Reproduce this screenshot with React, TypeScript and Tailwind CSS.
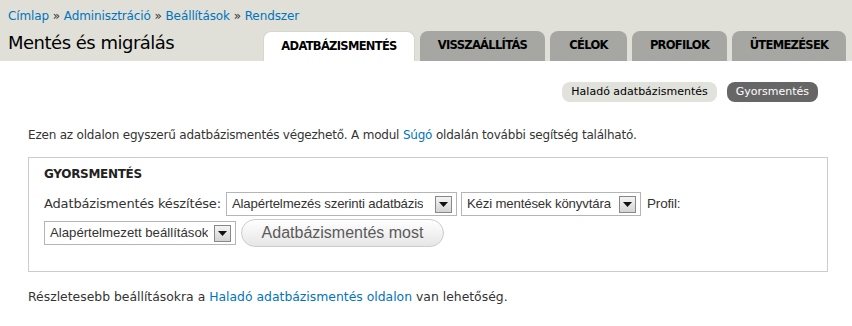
import React from 'react';

const sans = 'font-["DejaVu_Sans",Verdana,sans-serif]';
const arial = 'font-["Liberation_Sans",Arial,sans-serif]';

const tabs = [
  { label: 'Adatbázismentés', w: 'w-[152px]', active: true },
  { label: 'Visszaállítás', w: 'w-[125px]', active: false },
  { label: 'Célok', w: 'w-[77px]', active: false },
  { label: 'Profilok', w: 'w-[95px]', active: false },
  { label: 'Ütemezések', w: 'w-[114px]', active: false },
];

const FakeSelect: React.FC<{ value: string; width: string }> = ({ value, width }) => (
  <div
    className={`${width} h-[24px] flex items-center justify-between gap-[3px] border border-[#b5b5b5] bg-white pl-[5px] pr-[4px] ${arial} text-[13.2px] text-[#333]`}
  >
    <span className="whitespace-nowrap overflow-hidden">{value}</span>
    <span className="w-[17px] h-[17px] shrink-0 border border-[#888] bg-gradient-to-b from-[#f4f4f4] to-[#d4d4d4] flex items-center justify-center">
      <svg width="9" height="5" viewBox="0 0 9 5">
        <path d="M0 0h9L4.5 5z" fill="#111" />
      </svg>
    </span>
  </div>
);

export default function App() {
  return (
    <div className={`w-[852px] h-[326px] bg-white ${sans} text-[#333] overflow-hidden`}>
      {/* fejléc */}
      <div className="bg-[#e0e0d8] h-[61px] pl-2 pr-[6px] flex flex-col">
        <div className="pt-[8px] h-[31px] text-[12px] leading-[16px] text-[#0074bd] tracking-[-0.1px]">
          <a>Címlap</a> <span className="text-[#333]">»</span> <a>Adminisztráció</a>{' '}
          <span className="text-[#333]">»</span> <a>Beállítások</a> <span className="text-[#333]">»</span>{' '}
          <a>Rendszer</a>
        </div>
        <div className="flex flex-1 items-start justify-between">
          <h1 className="pt-[1px] text-[18px] leading-[22px] text-black tracking-[-0.5px]">Mentés és migrálás</h1>
          <ul className="flex gap-[5px] self-end">
            {tabs.map((t) => (
              <li
                key={t.label}
                className={`${t.w} h-[30px] rounded-t-[8px] flex items-center justify-center uppercase font-bold text-[11.5px] text-black tracking-[-0.7px] ${
                  t.active ? 'bg-white border border-b-0 border-[#d6d6ce]' : 'bg-[#a6a7a2]'
                }`}
              >
                {t.label}
              </li>
            ))}
          </ul>
        </div>
      </div>

      {/* tartalom */}
      <div className="pl-[28px] pr-[24px]">
        <div className="flex justify-end gap-[10px] pt-[21px] pr-[10px] text-[11px] leading-[20px]">
          <span className="px-[9px] rounded-[8px] bg-[#e1e2dc] text-[#000]">Haladó adatbázismentés</span>
          <span className="px-[9px] rounded-[8px] bg-[#666] text-white">Gyorsmentés</span>
        </div>

        <p className="mt-[24px] text-[12px] leading-[18px] tracking-[-0.2px]">
          Ezen az oldalon egyszerű adatbázismentés végezhető. A modul <a className="text-[#0074bd]">Súgó</a> oldalán
          további segítség található.
        </p>

        <fieldset className="mt-[13px] h-[115px] border border-[#ccc] px-[15px] pt-[7px]">
          <div className="font-bold text-[12px] leading-[18px] text-[#222] uppercase tracking-[-0.3px]">Gyorsmentés</div>
          <div className="mt-[9px] flex items-center gap-[4px] text-[13px] tracking-[-0.15px]">
            <span className="mr-[1px]">Adatbázismentés készítése:</span>
            <FakeSelect value="Alapértelmezés szerinti adatbázis" width="w-[231px]" />
            <FakeSelect value="Kézi mentések könyvtára" width="w-[180px]" />
            <span className={`ml-[2px] ${arial} text-[13.5px]`}>Profil:</span>
          </div>
          <div className="mt-[3px] flex items-center gap-[5px]">
            <FakeSelect value="Alapértelmezett beállítások" width="w-[192px]" />
            <button
              className={`w-[203px] h-[28px] rounded-full border border-[#ccc] bg-gradient-to-b from-white to-[#e6e6e6] ${arial} text-[16px] text-[#5a5a5a]`}
            >
              Adatbázismentés most
            </button>
          </div>
        </fieldset>

        <p className="mt-[16px] text-[12.4px] leading-[18px]">
          Részletesebb beállításokra a <a className="text-[#0074bd]">Haladó adatbázismentés oldalon</a> van lehetőség.
        </p>
      </div>
    </div>
  );
}
